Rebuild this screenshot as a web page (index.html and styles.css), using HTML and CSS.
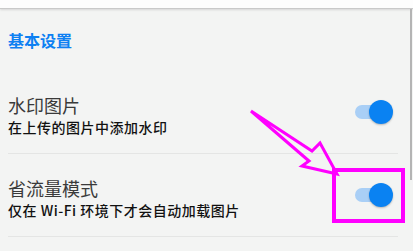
FILE: index.html
```html
<!DOCTYPE html>
<html lang="zh-CN">
<head>
<meta charset="utf-8">
<title>基本设置</title>
<link rel="stylesheet" href="styles.css">
</head>
<body>
<div class="topbar"></div>
<main class="page">
  <h2 class="section-title">基本设置</h2>
  <div class="row">
    <div class="text">
      <div class="title">水印图片</div>
      <div class="sub">在上传的图片中添加水印</div>
    </div>
    <div class="switch"><span class="knob"></span></div>
  </div>
  <div class="row">
    <div class="text">
      <div class="title">省流量模式</div>
      <div class="sub">仅在 Wi-Fi 环境下才会自动加载图片</div>
    </div>
    <div class="switch"><span class="knob"></span></div>
  </div>
</main>
<div class="scrollbar"></div>
<svg class="annot" width="413" height="251" viewBox="0 0 413 251">
  <polygon points="251,111 312,151 320,143 337,174 302,166 309,161" fill="none" stroke="#ff00ff" stroke-width="3" stroke-linejoin="miter"/>
  <rect x="334" y="170" width="69" height="51" fill="none" stroke="#ff00ff" stroke-width="4"/>
</svg>
</body>
</html>
```
FILE: styles.css
```css
html, body {
  margin: 0;
  padding: 0;
}
body {
  width: 413px;
  height: 251px;
  overflow: hidden;
  background: #f3f4f3;
  font-family: "Noto Sans CJK SC", "Noto Sans", sans-serif;
  position: relative;
}
.topbar {
  height: 8px;
  background: #fdfdfd;
  border-bottom: 1px solid #c9c9c9;
  box-shadow: 0 1px 2px rgba(0,0,0,0.12);
}
.page {
  display: flex;
  flex-direction: column;
}
.section-title {
  margin: 20px 8px 20px;
  font-size: 16px;
  line-height: 22px;
  font-weight: 700;
  color: #0d80f2;
}
.row {
  display: flex;
  align-items: flex-start;
  justify-content: space-between;
  margin: 0 15px 0 8px;
  padding: 22px 5px 17px 0;
  border-bottom: 1px solid #e4e5e4;
}
.title {
  font-size: 18px;
  line-height: 24px;
  color: #3a3a3a;
}
.sub {
  margin-top: 1px;
  font-size: 14px;
  line-height: 18px;
  letter-spacing: 0.5px;
  font-weight: 500;
  color: #111;
}
.switch {
  position: relative;
  width: 38px;
  height: 24px;
  margin-top: 7px;
}
.switch::before {
  content: "";
  position: absolute;
  left: 0;
  top: 5px;
  width: 34px;
  height: 14px;
  border-radius: 7px;
  background: #a9cff6;
}
.knob {
  position: absolute;
  right: 0;
  top: 0;
  width: 24px;
  height: 24px;
  border-radius: 50%;
  background: #0a82f2;
  box-shadow: 0 1px 2px rgba(0,0,0,0.25);
}
.scrollbar {
  position: absolute;
  right: 1px;
  top: 9px;
  width: 2px;
  height: 171px;
  background: #b4b4b4;
}
.annot {
  position: absolute;
  left: 0;
  top: 0;
  pointer-events: none;
}
```
